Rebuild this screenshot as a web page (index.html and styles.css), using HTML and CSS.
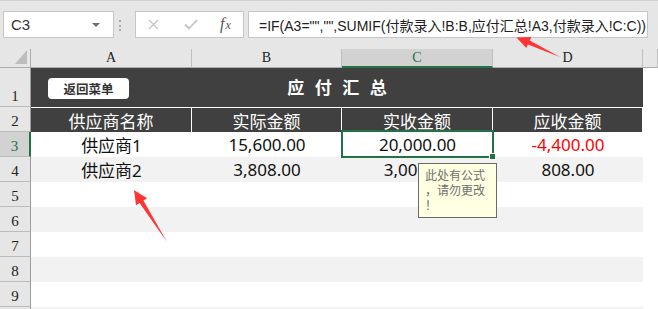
FILE: index.html
```html
<!DOCTYPE html>
<html lang="zh">
<head>
<meta charset="utf-8">
<title>应付汇总</title>
<link rel="stylesheet" href="styles.css">
</head>
<body>
<div class="app">
  <div class="formula-bar">
    <div class="name-box"><span class="ref">C3</span><span class="caret"></span></div>
    <div class="grip"><i></i><i></i><i></i></div>
    <div class="fx-box">
      <span class="icon">
        <svg width="11" height="11" viewBox="0 0 11 11"><path d="M1 1 L10 10 M10 1 L1 10" stroke="#c4c4c4" stroke-width="1.3" fill="none"/></svg>
      </span>
      <span class="icon">
        <svg width="14" height="11" viewBox="0 0 14 11"><path d="M1 5.5 L5 9.5 L13 1" stroke="#c4c4c4" stroke-width="1.8" fill="none"/></svg>
      </span>
      <span class="icon fx"><span class="f">f</span><span class="x">x</span></span>
    </div>
    <div class="formula">=IF(A3="","",SUMIF(付款录入!B:B,应付汇总!A3,付款录入!C:C))</div>
  </div>

  <div class="sheet">
    <div class="corner"></div>
    <div class="colh">A</div>
    <div class="colh">B</div>
    <div class="colh sel">C</div>
    <div class="colh">D</div>
    <div class="colh"></div>

    <div class="rowh tall">1</div>
    <div class="banner">
      <button class="back">返回菜单</button>
      <div class="title">应付汇总</div>
    </div>
    <div class="cell"></div>

    <div class="rowh">2</div>
    <div class="head">供应商名称</div>
    <div class="head">实际金额</div>
    <div class="head">实收金额</div>
    <div class="head">应收金额</div>
    <div class="cell"></div>

    <div class="rowh sel">3</div>
    <div class="cell">供应商1</div>
    <div class="cell">15,600.00</div>
    <div class="cell active">20,000.00<span class="handle"></span></div>
    <div class="cell neg">-4,400.00</div>
    <div class="cell"></div>

    <div class="rowh">4</div>
    <div class="cell alt">供应商2</div>
    <div class="cell alt">3,808.00</div>
    <div class="cell alt">3,000.00</div>
    <div class="cell alt">808.00</div>
    <div class="cell"></div>

    <div class="rowh">5</div>
    <div class="cell"></div><div class="cell"></div><div class="cell"></div><div class="cell"></div><div class="cell"></div>

    <div class="rowh">6</div>
    <div class="cell alt"></div><div class="cell alt"></div><div class="cell alt"></div><div class="cell alt"></div><div class="cell"></div>

    <div class="rowh">7</div>
    <div class="cell"></div><div class="cell"></div><div class="cell"></div><div class="cell"></div><div class="cell"></div>

    <div class="rowh">8</div>
    <div class="cell alt"></div><div class="cell alt"></div><div class="cell alt"></div><div class="cell alt"></div><div class="cell"></div>

    <div class="rowh">9</div>
    <div class="cell"></div><div class="cell"></div><div class="cell"></div><div class="cell"></div><div class="cell"></div>

    <div class="rowh"></div>
    <div class="cell alt"></div><div class="cell alt"></div><div class="cell alt"></div><div class="cell alt"></div><div class="cell"></div>
  </div>

  <div class="comment">此处有公式<br>，请勿更改<br>！</div>

  <svg class="arrows" width="658" height="309" viewBox="0 0 658 309">
    <polygon points="560,57 529.7,40.5 531.3,37.1 516.5,37.5 526.3,47.9 527.9,44.5" fill="#ff3434"/>
    <polygon points="167,242 143.4,200.6 147,198.3 134,190 136,205.3 139.6,203" fill="#ff3434"/>
  </svg>
</div>
</body>
</html>
```

FILE: styles.css
```css
* { box-sizing: border-box; }

body {
  margin: 0;
  background: #ffffff;
}

.app {
  position: relative;
  width: 658px;
  height: 309px;
  overflow: hidden;
  font-family: "Noto Sans", "Noto Sans CJK SC", sans-serif;
}

/* ---------- formula bar ---------- */
.formula-bar {
  display: flex;
  align-items: flex-start;
  height: 49px;
  padding: 10px 0 0 3px;
  background: #e6e6e6;
  border-top: 1px solid #d2d2d2;
}

.name-box {
  display: flex;
  align-items: center;
  width: 111px;
  height: 27px;
  padding-left: 7px;
  background: #ffffff;
  border: 1px solid #c6c6c6;
  font-family: "Liberation Sans", sans-serif;
  font-size: 15px;
  color: #333333;
}

.caret {
  margin-left: auto;
  margin-right: 13px;
  width: 0;
  height: 0;
  border-left: 4px solid transparent;
  border-right: 4px solid transparent;
  border-top: 4px solid #6e6e6e;
}

.grip {
  display: flex;
  flex-direction: column;
  gap: 2.5px;
  width: 21px;
  padding: 9px 0 0 5px;
}

.grip i {
  display: block;
  width: 2px;
  height: 2px;
  background: #a8a8a8;
}

.fx-box {
  display: flex;
  align-items: center;
  width: 109px;
  height: 27px;
  padding-left: 12px;
  background: #ffffff;
  border: 1px solid #c6c6c6;
}

.icon {
  display: flex;
  align-items: center;
  justify-content: flex-start;
  width: 36px;
  height: 100%;
}

.fx {
  width: 20px;
  font-family: "Liberation Serif", serif;
  font-style: italic;
  color: #555555;
  padding-bottom: 1px;
}

.fx .f { font-size: 16px; }
.fx .x { font-size: 12px; margin-left: 1px; margin-top: 3px; }

.formula {
  display: flex;
  align-items: center;
  width: 400px;
  height: 27px;
  margin-left: 4px;
  padding-left: 10px;
  background: #ffffff;
  border: 1px solid #c6c6c6;
  font-family: "Liberation Sans", "Noto Sans CJK SC", sans-serif;
  font-size: 14px;
  color: #222222;
  white-space: nowrap;
}

/* ---------- sheet grid ---------- */
.sheet {
  display: grid;
  grid-template-columns: 31px 161px 150px 151px 150px 15px;
  grid-template-rows: 19px 39px repeat(8, 25px) 25px;
}

.corner {
  position: relative;
  background: #e6e6e6;
  border-right: 1px solid #ababab;
  border-bottom: 1px solid #ababab;
}

.corner::after {
  content: "";
  position: absolute;
  right: 3px;
  bottom: 3px;
  width: 0;
  height: 0;
  border-left: 12px solid transparent;
  border-bottom: 14px solid #bdbdbd;
}

.colh {
  display: flex;
  align-items: center;
  justify-content: center;
  background: #e6e6e6;
  border-right: 1px solid #bfbfbf;
  border-bottom: 1px solid #ababab;
  font-family: "Liberation Serif", serif;
  font-size: 14px;
  color: #222222;
}

.colh.sel {
  background: #d2d2d2;
  color: #217346;
  border-bottom: 2px solid #217346;
}

.rowh {
  display: flex;
  align-items: flex-end;
  justify-content: center;
  padding-bottom: 1px;
  background: #e6e6e6;
  border-right: 1px solid #9b9b9b;
  border-bottom: 1px solid #bcbcbc;
  font-family: "Liberation Serif", serif;
  font-size: 15px;
  line-height: 17px;
  color: #222222;
}

.rowh.sel {
  background: #d2d2d2;
  color: #217346;
  border-right: 2px solid #217346;
}

.banner {
  grid-column: span 4;
  display: grid;
  grid-template-columns: 1fr auto 1fr;
  align-items: center;
  background: #404040;
}

.back {
  justify-self: start;
  width: 81px;
  height: 21px;
  margin: 2px 0 0 17px;
  padding: 0;
  background: #ffffff;
  border: none;
  border-radius: 4px;
  font-family: "Noto Sans CJK SC", sans-serif;
  font-weight: 700;
  font-size: 12.5px;
  line-height: 21px;
  color: #333333;
}

.title {
  padding-left: 10.5px;
  letter-spacing: 10.5px;
  font-family: "Noto Sans CJK SC", sans-serif;
  font-weight: 700;
  font-size: 17px;
  color: #ffffff;
  margin-bottom: 2px;
}

.head {
  display: flex;
  align-items: center;
  justify-content: center;
  background: #404040;
  border-top: 1px solid #ffffff;
  border-right: 1px solid #ffffff;
  font-size: 17px;
  color: #ffffff;
}

.cell {
  display: flex;
  align-items: center;
  justify-content: center;
  background: #ffffff;
  font-size: 17px;
  color: #111111;
  white-space: nowrap;
}

.cell.alt { background: #f2f2f2; }
.cell.neg { color: #ff0000; }

.cell.active { position: relative; }

.cell.active::after {
  content: "";
  position: absolute;
  top: -2px;
  left: -1px;
  right: -1px;
  bottom: -1px;
  border: 2px solid #217346;
}

.handle {
  position: absolute;
  right: -3px;
  bottom: -3px;
  width: 7px;
  height: 7px;
  background: #217346;
  border: 1px solid #ffffff;
  z-index: 1;
}

/* ---------- overlays ---------- */
.comment {
  position: absolute;
  left: 418px;
  top: 163px;
  width: 79px;
  height: 55px;
  padding: 3px 0 0 6px;
  background: #ffffe1;
  border: 1.5px solid #6b6b6b;
  font-family: "Noto Sans CJK SC", sans-serif;
  font-size: 12px;
  line-height: 15px;
  color: #707070;
}

.arrows {
  position: absolute;
  left: 0;
  top: 0;
  pointer-events: none;
}
```
